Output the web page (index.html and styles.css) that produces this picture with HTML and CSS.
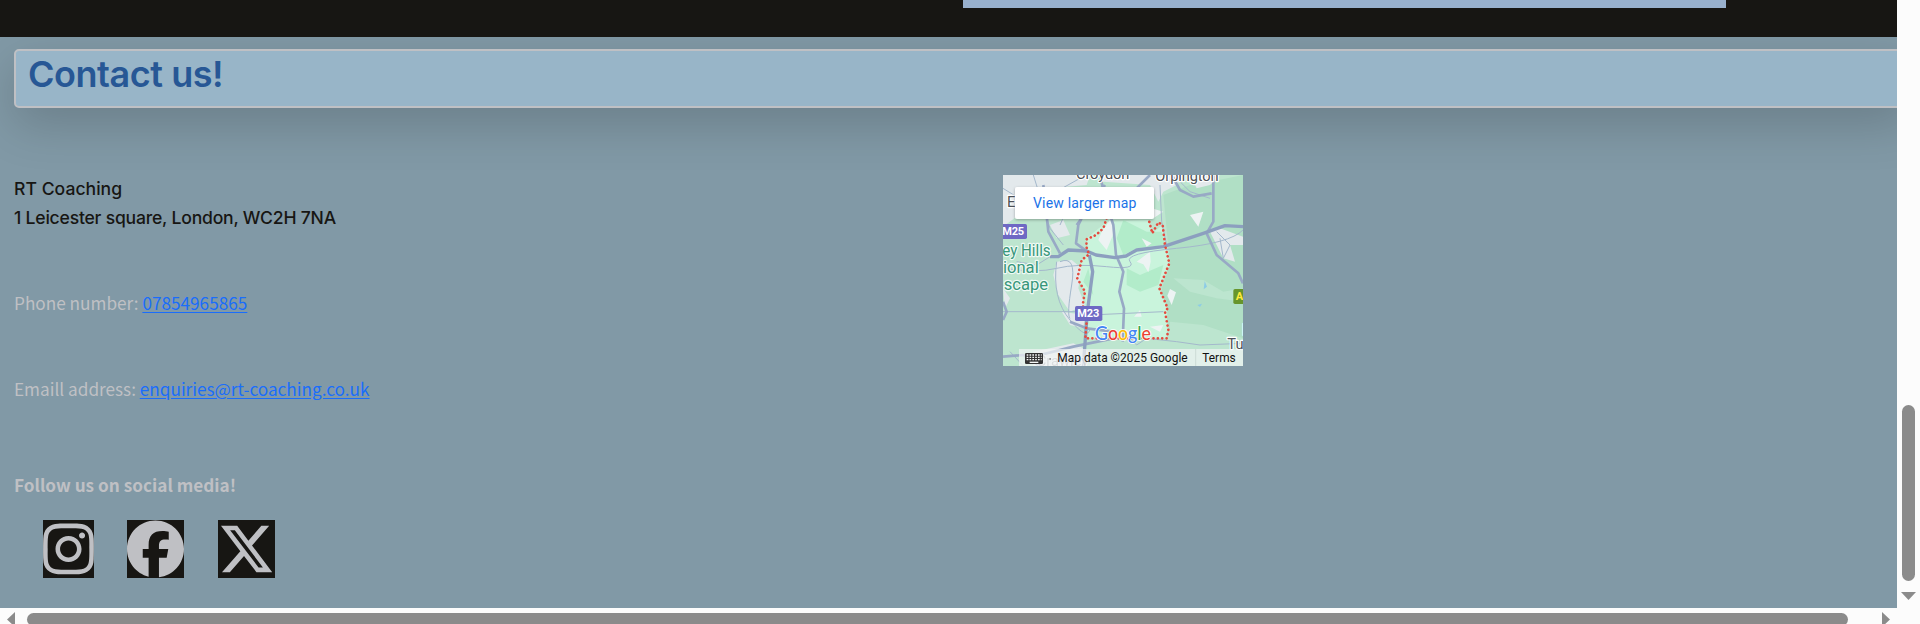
FILE: index.html
```html
<!DOCTYPE html>
<html lang="en">
<head>
<meta charset="utf-8">
<title>RT Coaching</title>
<link rel="stylesheet" href="styles.css">
</head>
<body>
<div class="window">
  <div class="viewport">
    <div class="band"><div class="band-card"></div></div>
    <main class="contact">
      <div class="title-box"><h1 class="title"><span>Contact us!</span></h1></div>
      <div class="columns">
        <section class="details">
          <p class="address"><span class="a1">RT Coaching</span><br><span class="a2">1 Leicester square, London, WC2H 7NA</span></p>
          <p class="line first"><span class="label-phone">Phone number:</span> <a class="phone" href="#">07854965865</a></p>
          <p class="line"><span class="label-mail">Emaill address:</span> <a class="mail" href="#">enquiries@rt-coaching.co.uk</a></p>
          <p class="follow">Follow us on social media!</p>
          <div class="social">
            <svg class="insta" viewBox="0 0 448 512"><path d="M224.1 141c-63.6 0-114.9 51.3-114.9 114.9s51.3 114.9 114.9 114.9S339 319.5 339 255.9 287.7 141 224.1 141zm0 189.6c-41.1 0-74.7-33.5-74.7-74.7s33.5-74.7 74.7-74.7 74.7 33.5 74.7 74.7-33.6 74.7-74.7 74.7zm146.4-194.3c0 14.9-12 26.8-26.8 26.8-14.9 0-26.8-12-26.8-26.8s12-26.8 26.8-26.8 26.8 12 26.8 26.8zm76.1 27.2c-1.7-35.9-9.9-67.7-36.2-93.9-26.2-26.2-58-34.4-93.9-36.2-37-2.1-147.9-2.1-184.9 0-35.8 1.7-67.6 9.9-93.9 36.1s-34.4 58-36.2 93.9c-2.1 37-2.1 147.9 0 184.9 1.7 35.9 9.9 67.7 36.2 93.9s58 34.4 93.9 36.2c37 2.1 147.9 2.1 184.9 0 35.9-1.7 67.7-9.9 93.9-36.2 26.2-26.2 34.4-58 36.2-93.9 2.1-37 2.1-147.8 0-184.8zM398.8 388c-7.8 19.6-22.9 34.7-42.6 42.6-29.5 11.7-99.5 9-132.1 9s-102.7 2.6-132.1-9c-19.6-7.8-34.7-22.9-42.6-42.6-11.7-29.5-9-99.5-9-132.1s-2.6-102.7 9-132.1c7.8-19.6 22.9-34.7 42.6-42.6 29.5-11.7 99.5-9 132.1-9s102.7-2.6 132.1 9c19.6 7.8 34.7 22.9 42.6 42.6 11.7 29.5 9 99.5 9 132.1s2.7 102.7-9 132.1z"/></svg>
            <svg class="fb" viewBox="0 0 512 512"><path d="M512 256C512 114.6 397.4 0 256 0S0 114.6 0 256C0 376 82.7 476.8 194.2 504.5V334.2H141.4V256h52.8V222.3c0-87.1 39.4-127.5 125-127.5c16.2 0 44.2 3.2 55.7 6.4V172c-6-.6-16.5-1-29.6-1c-42 0-58.2 15.9-58.2 57.2V256h83.6l-14.4 78.2H287V510.1C413.8 494.8 512 386.9 512 256h0z"/></svg>
            <svg class="x" viewBox="0 0 512 512"><path d="M389.2 48h70.6L305.6 224.2 487 464H345L233.7 318.6 106.5 464H35.8L200.7 275.5 26.8 48H172.4L272.9 180.9 389.2 48zM364.4 421.8h39.1L151.1 88h-42L364.4 421.8z"/></svg>
          </div>
        </section>
        <section class="map-col">
          <svg class="map" viewBox="39 30 720 573">
            <defs><filter id="sh" x="-10%" y="-20%" width="120%" height="150%"><feDropShadow dx="0" dy="3" stdDeviation="4" flood-opacity=".3"/></filter></defs>
            <rect x="39" y="30" width="720" height="573" fill="#bde5cf"/>
            <!-- land cover -->
            <path fill="#b0dfc5" d="M520 90L600 60 660 50 759 30V603H540L540 500 520 430 515 370 540 300Z"/>
            <path fill="#bce5cf" d="M550 340L640 345 700 380 759 370V410L680 400 600 380Z M540 470L640 480 759 520V603H540Z"/>
            <path fill="#c9f4dc" d="M290 220L350 170 475 165 487 205 518 180 538 300 508 370 532 430 530 520 290 520 285 380 262 340 275 285 295 265Z"/>
            <path fill="#b2ecca" d="M295 310L310 390 280 350ZM400 165L470 200 515 200 525 240 440 250 400 270 380 220ZM410 310L450 330 520 300 505 360 450 380 410 360Z"/>
            <path fill="#e3e9ec" d="M39 30H300L290 60 230 65 160 75 140 110 39 185ZM320 30H580L560 60 520 80 505 110 480 60 340 50ZM200 290L245 285 275 310 265 370 285 420 240 440 205 390 190 330ZM215 440L285 450 280 490 240 480ZM660 200L690 190 759 215V240L720 240 735 290 700 280 680 240ZM600 30L690 30 660 60 620 70ZM180 180L220 165 240 210 200 220ZM39 370L60 400 45 430ZM130 560L250 535 300 560 290 603H130Z"/>
            <path fill="#edf3f3" d="M335 200L360 165 375 195 350 255 325 225ZM440 290L480 260 482 290 475 322 460 298ZM455 220L485 235 470 245ZM485 130L520 140 490 160ZM600 150L640 140 625 185ZM540 372L558 382 545 420 532 392ZM450 435L455 455 432 455ZM480 485L520 480 510 500Z"/>
            <path fill="#8dcce6" d="M644 348L651 365 641 373ZM622 420L636 416 630 426Z"/>
            <!-- minor roads -->
            <g fill="none" stroke="#a4b8cc" stroke-width="3">
              <path d="M39 310Q140 325 200 310T350 305 420 290 560 250 759 195M200 290Q185 400 240 465T300 490M210 290Q260 270 245 360T240 460M510 60L515 170 530 240M39 70L120 120 180 90 270 40M130 30L180 190 220 240M400 500L440 540 470 520 560 530 630 540 759 535M80 290L140 300 180 275M560 40L600 80 660 100M680 200L720 240 700 280 690 220M300 450L520 440M39 440H260M250 90L210 180M450 60L430 100M100 603L60 560"/>
            </g>
            <!-- main roads -->
            <g fill="none" stroke="#98a9c5" stroke-linejoin="round">
              <path d="M330 30L345 100 370 180 378 270 400 320 388 380 402 430 398 530M160 60L175 200 210 265M290 130L265 180 258 235 295 262M345 60L290 140 260 180M480 30L430 80 380 160M545 30L570 75 610 95 665 85M670 30V170L650 205 680 270 745 325 759 355M39 410L50 440 39 465M240 470L290 490 370 500M150 570L250 545 370 520M39 575L100 570 150 603" stroke-width="8"/>
              <path d="M180 275H205L235 255 290 258 318 270 375 278 408 273 440 255 520 245 640 205 705 182 759 185M298 270L308 320 300 380 292 440 280 603" stroke="#8c9fbf" stroke-width="10"/>
            </g>
            <path fill="none" stroke="#e44b3f" stroke-width="8" stroke-linecap="round" stroke-linejoin="round" stroke-dasharray=".1 13" d="M350 160L340 190 318 210 290 223 289 245 297 268 275 285 262 340 285 380 278 420 290 470 286 520H530L535 495 525 440 533 430 508 370 538 295 525 240 518 180 505 172 487 205 475 160"/>
            <g class="place">
              <text x="258" y="42" textLength="160">Croydon</text><text x="496" y="49" textLength="190">Orpington</text><text x="51" y="125">E</text>
              <text x="712" y="551">Tu</text><text x="757" y="510">I</text><text x="140" y="602" textLength="155" opacity=".45">Crawley</text>
            </g>
            <g class="park"><text x="37" y="274" textLength="145" lengthAdjust="spacingAndGlyphs">ey Hills</text><text x="39" y="323" textLength="107" lengthAdjust="spacingAndGlyphs">ional</text><text x="41" y="374" textLength="133" lengthAdjust="spacingAndGlyphs">scape</text></g>
            <g class="shield"><rect x="30" y="177" width="81" height="45" rx="5" fill="#6e69c4"/><text x="37" y="210" textLength="65">M25</text><rect x="255" y="423" width="82" height="45" rx="5" fill="#6e69c4"/><text x="262" y="455" textLength="66">M23</text><rect x="730" y="372" width="50" height="45" rx="5" fill="#67952c"/><text x="737" y="405" fill="#ffeb3b">A</text></g>
            <g class="google"><text x="315" y="526" textLength="168" lengthAdjust="spacingAndGlyphs"><tspan fill="#4285f4">G</tspan><tspan fill="#ea4335">o</tspan><tspan fill="#fbbc05">o</tspan><tspan fill="#4285f4">g</tspan><tspan fill="#34a853">l</tspan><tspan fill="#ea4335">e</tspan></text></g>
            <path d="M87 552H759V603H87Z" fill="#f2f5f5" opacity=".7"/><path d="M617 552V603" stroke="#c3d1ca" stroke-width="2"/>
            <rect x="105" y="564" width="54" height="33" rx="4" fill="#333"/>
            <g stroke="#f5f7f7" stroke-width="4" stroke-dasharray="5 3.5"><path d="M110 570H155M110 577H155M110 584H155"/></g><path d="M119 592H145" stroke="#f5f7f7" stroke-width="4"/><path d="M178 582H183" stroke="#555" stroke-width="3"/>
            <g class="credits"><text x="202" y="591" textLength="391" lengthAdjust="spacingAndGlyphs">Map data ©2025 Google</text><text x="637" y="591" textLength="100" lengthAdjust="spacingAndGlyphs">Terms</text></g>
            <rect x="75" y="66" width="417" height="96" rx="6" fill="#fff" filter="url(#sh)"/>
            <text class="larger" x="129" y="129" textLength="310">View larger map</text>
          </svg>
        </section>
      </div>
    </main>
  </div>
  <div class="vbar"><div class="vthumb"></div><div class="down"></div></div>
  <div class="hbar"><div class="left"></div><div class="hthumb"></div><div class="right"></div></div>
</div>
</body>
</html>
```
FILE: styles.css
```css
* { box-sizing: border-box; }
body { margin: 0; overflow: hidden; font-family: "Noto Sans CJK SC", "Noto Sans", sans-serif; }
.window { display: grid; grid-template-columns: 1897px 23px; grid-template-rows: 608px 16px; width: 1920px; height: 624px; background: #fcfcfc; overflow: hidden; }
.viewport { overflow: hidden; background: #8199a6; }
.band { height: 37px; background: #171613; padding-left: 963px; }
.band-card { width: 763px; height: 8px; background: #98b0cd; }
.contact { height: 571px; padding: 12px 0 0 14px; overflow: hidden; }
.title-box { width: 1897px; height: 59px; border: 2px solid #bfc0c4; border-radius: 5px; background: #98b5c8; box-shadow: 0 16px 48px rgba(0, 0, 0, .175); padding-left: 12px; }
.title { margin: 0; font: 600 36px/46px "Inter", sans-serif; color: #275795; letter-spacing: -.45px; }
.columns { display: grid; grid-template-columns: 989px 1fr; padding-top: 67px; }
.details { display: flex; flex-direction: column; font-size: 17.2px; line-height: 29px; color: #bfc0c4; white-space: nowrap; }
.details p { margin: 0; }
.details .address { height: 58px; margin-top: -1px; color: #171613; font: 450 17.6px/29px "Inter", sans-serif; }
.a1 { letter-spacing: .02px; }
.a2 { letter-spacing: -.22px; }
.details .line { margin-top: 57px; height: 29px; }
.details .first { margin-top: 56px; }
.line a { color: #1a6dfb; text-decoration: underline; text-underline-offset: 2px; }
.details .follow { margin-top: 67px; font-weight: 700; }
.social { display: flex; padding: 21px 0 0 29px; }
.social svg { height: 58px; background: #171613; fill: #bfc0c4; overflow: visible; }
.insta { width: 51px; margin-right: 33px; }
.fb { width: 57px; margin-right: 34px; }
.x { width: 57px; }
.map { display: block; width: 240px; height: 191px; overflow: hidden; font-family: Roboto, sans-serif; }
.place { font-size: 44px; fill: #4d5156; stroke: #fff; stroke-width: 7px; paint-order: stroke; stroke-linejoin: round; }
.park { font-size: 49px; fill: #38967a; stroke: #effaf5; stroke-width: 7px; paint-order: stroke; stroke-linejoin: round; }
.shield { font-size: 33px; font-weight: 700; fill: #fff; }
.google { font: 500 58px "Lato", sans-serif; stroke: #fff; stroke-width: 5px; paint-order: stroke; }
.credits { font-size: 38px; fill: #111; }
.larger { font-size: 42px; fill: #1a73e8; }
.vbar { grid-row: 1 / 3; grid-column: 2; padding: 405px 0 0 5px; }
.vthumb { width: 13px; height: 176px; border-radius: 7px; background: #8b8b8b; }
.down { width: 15px; height: 8px; margin: 11px 0 0 -1px; background: #8b8b8b; clip-path: polygon(0 0, 100% 0, 50% 100%); }
.hbar { grid-row: 2; grid-column: 1; display: flex; padding: 4px 0 0 7px; overflow: hidden; }
.left, .right { width: 8px; height: 15px; flex: none; background: #8b8b8b; }
.left { clip-path: polygon(100% 0, 100% 100%, 0 50%); }
.right { margin-left: 34px; clip-path: polygon(0 0, 100% 50%, 0 100%); }
.hthumb { width: 1821px; height: 13px; margin: 1px 0 0 12px; border-radius: 7px; background: #8b8b8b; flex: none; }
```
